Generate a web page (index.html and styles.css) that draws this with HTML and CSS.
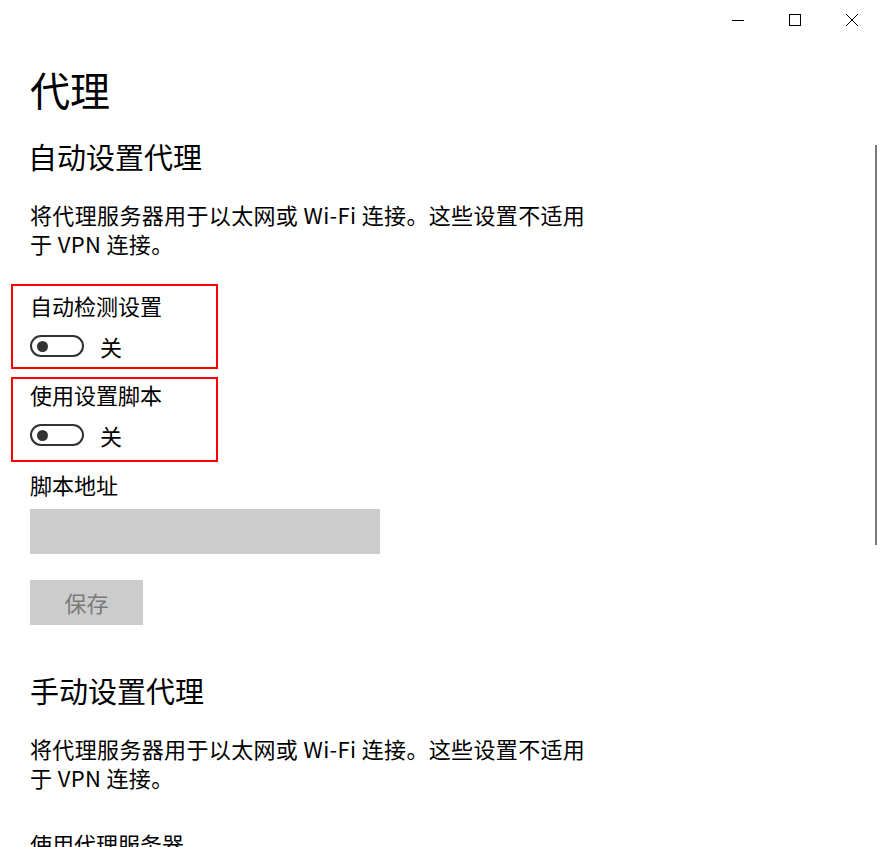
FILE: index.html
```html
<!DOCTYPE html>
<html lang="zh-CN">
<head>
<meta charset="UTF-8">
<meta name="viewport" content="width=device-width, initial-scale=1.0">
<title>代理</title>
<link rel="stylesheet" href="styles.css">
</head>
<body>
  <div class="titlebar">
    <div class="caption-btn">
      <svg width="12" height="12" viewBox="0 0 12 12"><path d="M0 6.5h12" stroke="#000" stroke-width="1"/></svg>
    </div>
    <div class="caption-btn">
      <svg width="12" height="12" viewBox="0 0 12 12"><rect x="0.5" y="0.5" width="11" height="11" fill="none" stroke="#000" stroke-width="1"/></svg>
    </div>
    <div class="caption-btn">
      <svg width="12" height="12" viewBox="0 0 12 12"><path d="M0 0L12 12M12 0L0 12" stroke="#000" stroke-width="1"/></svg>
    </div>
  </div>

  <div class="window">
    <div class="content">
      <h1 class="page-title">代理</h1>

      <h2 class="section-title">自动设置代理</h2>
      <p class="desc">将代理服务器用于以太网或 Wi-Fi 连接。这些设置不适用于 VPN 连接。</p>

      <div class="setting marked">
        <div class="setting-label">自动检测设置</div>
        <div class="toggle-row">
          <span class="toggle"><span class="knob"></span></span>
          <span class="toggle-text">关</span>
        </div>
      </div>

      <div class="setting marked second">
        <div class="setting-label">使用设置脚本</div>
        <div class="toggle-row">
          <span class="toggle"><span class="knob"></span></span>
          <span class="toggle-text">关</span>
        </div>
      </div>

      <div class="field-label">脚本地址</div>
      <div class="textbox"></div>
      <div class="save-btn">保存</div>

      <h2 class="section-title manual">手动设置代理</h2>
      <p class="desc">将代理服务器用于以太网或 Wi-Fi 连接。这些设置不适用于 VPN 连接。</p>

      <div class="field-label last">使用代理服务器</div>
    </div>
    <div class="scroll-rail">
      <div class="scroll-thumb"></div>
    </div>
  </div>
</body>
</html>
```

FILE: styles.css
```css
body {
  margin: 0;
  padding: 0;
  width: 880px;
  height: 847px;
  overflow: hidden;
  background: #fff;
  color: #000;
  font-family: 'Noto Sans CJK SC', 'Noto Sans', sans-serif;
}
.titlebar {
  display: flex;
  justify-content: flex-end;
  height: 40px;
}
.caption-btn {
  width: 57px;
  height: 40px;
  display: flex;
  align-items: center;
  justify-content: center;
}
.window {
  display: flex;
}
.content {
  flex: 1;
  padding-left: 30px;
}
.page-title {
  margin: 0;
  font-size: 40px;
  font-weight: normal;
  line-height: 56px;
  margin-top: 21px;
}
.section-title {
  margin: 0;
  font-size: 29px;
  font-weight: normal;
  line-height: 40px;
  margin-top: 19px;
  margin-left: -2px;
}
.section-title.manual {
  margin-top: 45px;
  margin-left: 0;
}
.desc {
  margin: 24px 0 0;
  width: 570px;
  font-size: 22px;
  line-height: 29px;
  letter-spacing: 0.35px;
}
.setting {
  width: 186px;
  height: 81px;
  margin-top: 26px;
}
.setting.second {
  margin-top: 8px;
}
.marked {
  border: 2px solid #ff0000;
  margin-left: -19px;
  padding-left: 17px;
}
.setting-label,
.field-label {
  font-size: 22px;
  line-height: 30px;
}
.setting-label {
  margin-top: 4px;
}
.second .setting-label {
  margin-top: 0;
}
.toggle-row {
  display: flex;
  align-items: center;
  margin-top: 11px;
}
.toggle {
  box-sizing: border-box;
  width: 54px;
  height: 22px;
  border: 2px solid #333;
  border-radius: 11px;
  display: flex;
  align-items: center;
  padding-left: 5px;
}
.knob {
  width: 11px;
  height: 11px;
  border-radius: 50%;
  background: #333;
}
.toggle-text {
  font-size: 22px;
  line-height: 30px;
  margin-left: 16px;
}
.field-label {
  margin-top: 7px;
}
.field-label.last {
  margin-top: 36px;
}
.textbox {
  width: 350px;
  height: 45px;
  background: #cccccc;
  margin-top: 10px;
}
.save-btn {
  width: 113px;
  height: 45px;
  margin-top: 26px;
  background: #cccccc;
  color: #7a7a7a;
  font-size: 22px;
  line-height: 45px;
  text-align: center;
}
.scroll-rail {
  width: 5px;
}
.scroll-thumb {
  width: 2px;
  height: 400px;
  margin-top: 105px;
  background: #7a7a7a;
}
```
